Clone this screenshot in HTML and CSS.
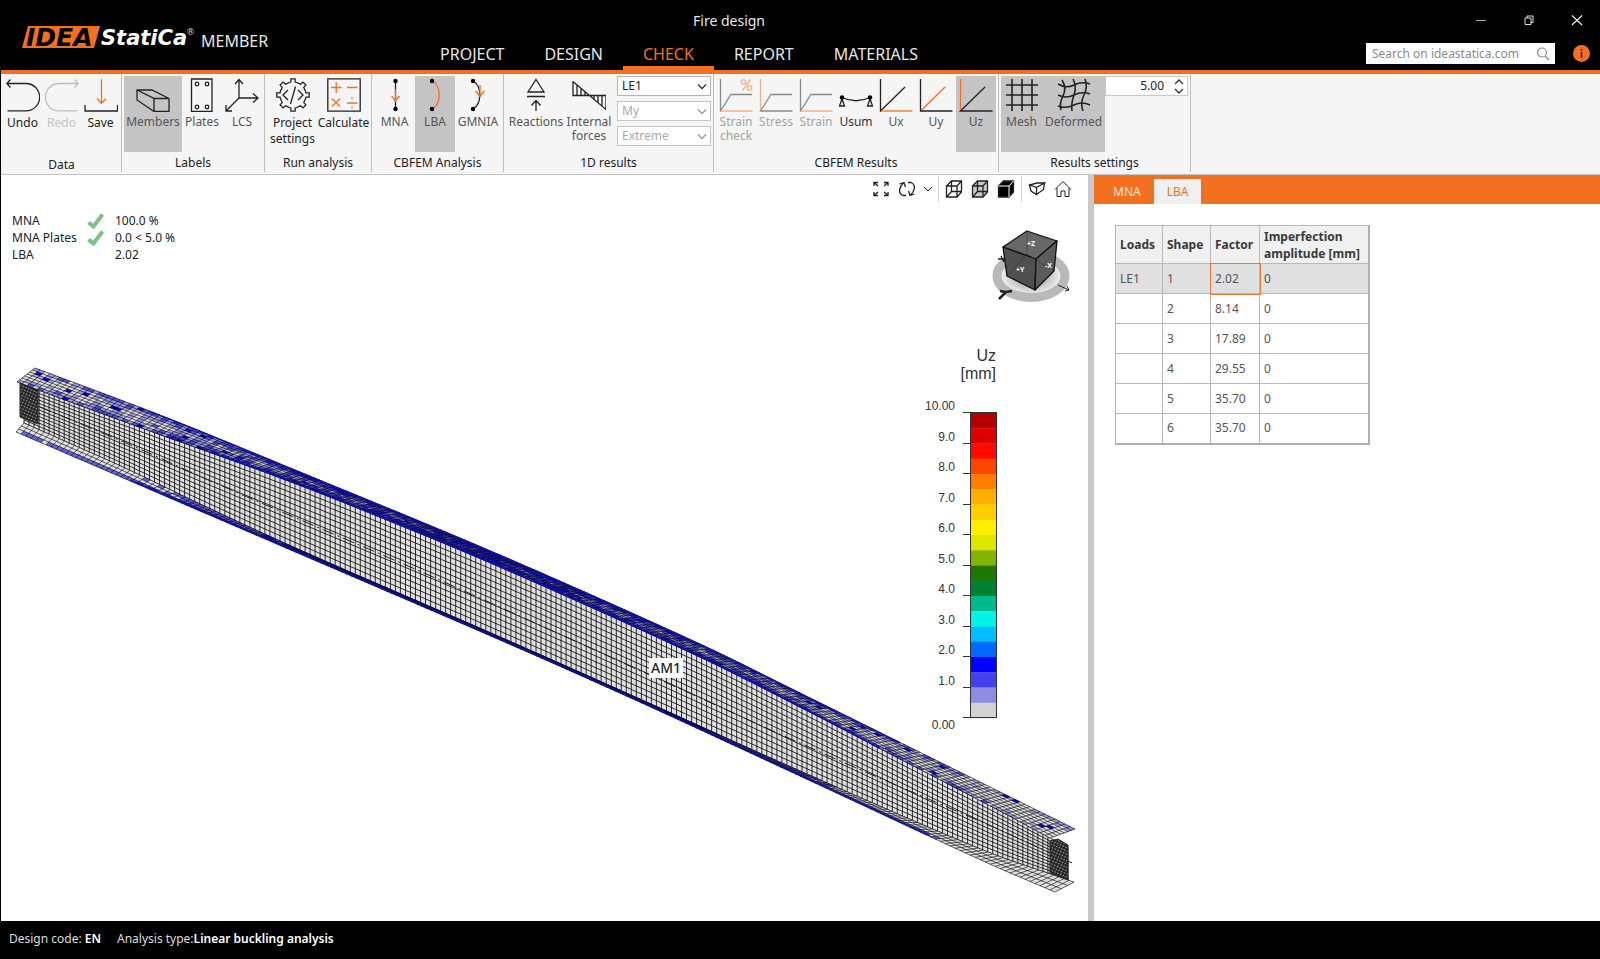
FILE: index.html
```html
<!DOCTYPE html>
<html lang="en">
<head>
<meta charset="utf-8">
<title>Fire design - IDEA StatiCa Member</title>
<meta name="viewport" content="width=device-width, initial-scale=1">
<link rel="stylesheet" href="styles.css">
</head>
<body>
<header class="header">
  <div class="brand">
    <svg class="brand-logo" width="170" height="30" viewBox="0 0 170 30" role="img" aria-label="IDEA StatiCa">
      <path d="M6 4H78L72 26H0Z" fill="#f37021"/>
      <text class="logo-idea" x="4" y="24">IDEA</text>
      <text class="logo-statica" x="79" y="23">StatiCa</text>
      <text class="logo-reg" x="164" y="13">®</text>
    </svg>
    <span class="brand-product">MEMBER</span>
  </div>
  <div class="header-center">
    <h1 class="doc-title">Fire design</h1>
    <nav class="tabs">
      <a class="tab" href="#project">PROJECT</a>
      <a class="tab" href="#design">DESIGN</a>
      <a class="tab tab-active" href="#check" aria-current="page">CHECK</a>
      <a class="tab" href="#report">REPORT</a>
      <a class="tab" href="#materials">MATERIALS</a>
    </nav>
  </div>
  <div class="header-side">
    <div class="window-controls">
      <button class="win-btn" aria-label="Minimize"><svg width="12" height="12"><path d="M1 6.500H11" stroke="#aaa"/></svg></button>
      <button class="win-btn" aria-label="Restore"><svg width="12" height="12" fill="none" stroke="#ddd"><path d="M2 4h6v6.500H2zM4 4V2h6v6.500H8"/></svg></button>
      <button class="win-btn" aria-label="Close"><svg width="12" height="12"><path d="M1 1.500L11 11M11 1.500L1 11" stroke="#eee" stroke-width="1.200"/></svg></button>
    </div>
    <div class="search-row">
      <label class="search">
        <input class="search-input" type="text" placeholder="Search on ideastatica.com" aria-label="Search on ideastatica.com">
        <svg width="14" height="14" fill="none" stroke="#888" stroke-width="1.200"><circle cx="6" cy="5.500" r="4.500"/><path d="M9 9l4 4"/></svg>
      </label>
      <button class="info" aria-label="Information"><svg width="17" height="17"><circle cx="8.500" cy="8.500" r="8.500" fill="#f37021"/><path d="M8.500 7v6M8.500 4v2" stroke="#222" stroke-width="1.500"/></svg></button>
    </div>
  </div>
</header>

<div class="ribbon">
  <section class="group group-data">
    <div class="group-items">
      <button class="rb rb-roomy w39"><svg class="ic" viewBox="0 0 34 34"><path d="M4.500 1.500L.8 5.500l3.700 4M1 5.500H20a13.700 13.700 0 0 1 0 27.400H1.500"/></svg>Undo</button>
      <button class="rb rb-roomy w39 rb-disabled" disabled><svg class="ic" viewBox="0 0 34 34"><path d="M29.500 1.500l3.700 4l-3.700 4M33 5.500H14a13.700 13.700 0 0 0 0 27.400H32.500"/></svg>Redo</button>
      <button class="rb rb-roomy w39"><svg class="ic" viewBox="0 0 34 34"><path d="M1 27v6H33.500V27"/><path class="or" d="M17.500 1V25M13 20.500l4.500 4.800l4.500-4.800"/></svg>Save</button>
    </div>
    <h2 class="group-label">Data</h2>
  </section>
  <section class="group">
    <div class="group-items">
      <button class="rb w58 rb-on" aria-pressed="true"><svg class="ic" viewBox="0 0 34 34"><path d="M1 12V22L18 33.500V20.500ZM1 12H16L33 20.500H18M33 20.500V33.500H18"/></svg>Members</button>
      <button class="rb w40"><svg class="ic" viewBox="0 0 34 34"><path d="M6.500 1H27V33.500H6.500Z"/><circle cx="12" cy="6" r="1.800"/><circle cx="22" cy="6" r="1.800"/><circle cx="12" cy="29" r="1.800"/><circle cx="22" cy="29" r="1.800"/></svg>Plates</button>
      <button class="rb w40"><svg class="ic" viewBox="0 0 34 34"><path d="M14 2V20H33M14 20L1 33M10 6L14 1.500L18 6M28 15.500l5 4.500l-5 4.500M1 27v6h6"/></svg>LCS</button>
    </div>
    <h2 class="group-label">Labels</h2>
  </section>
  <section class="group">
    <div class="group-items">
      <button class="rb rb-roomy w51"><svg class="ic" viewBox="0 0 34 34"><path id="gear" d=""/><path d="M12 12l-5 5l5 5M22 12l5 5l-5 5M19.500 8.500L14.500 26"/></svg>Project settings</button>
      <button class="rb rb-roomy w51"><svg class="ic" viewBox="0 0 34 34"><path d="M.8 .8H33.200V33.200H.8Z"/><path class="or" d="M4 9.500H14.500M9.200 4V15M20 9.500H30.500M5 20.500l8 8M13 20.500l-8 8M20 25H30.500M25 19v2M25 28.500v2"/></svg>Calculate</button>
    </div>
    <h2 class="group-label">Run analysis</h2>
  </section>
  <section class="group">
    <div class="group-items">
      <button class="rb w41"><svg class="ic" viewBox="0 0 34 34"><path d="M17.500 3V31"/><path class="or" d="M17.500 11V22M13.500 18l4 5l4-5"/><circle class="dot" cx="17.500" cy="3" r="2.200"/><circle class="dot" cx="17.500" cy="31" r="2.200"/></svg>MNA</button>
      <button class="rb w40 rb-on" aria-pressed="true"><svg class="ic" viewBox="0 0 34 34"><path class="or" d="M14 3C23.500 8 23.500 26 14 31"/><circle class="dot" cx="14" cy="3" r="2.200"/><circle class="dot" cx="14" cy="31" r="2.200"/></svg>LBA</button>
      <button class="rb w46"><svg class="ic" viewBox="0 0 34 34"><path d="M12 3C21 8 21 26 12 31"/><path class="or" d="M19 7V18M14.500 13l4.500 5.500l4.500-5.500"/><circle class="dot" cx="12" cy="3" r="2.200"/><circle class="dot" cx="12" cy="31" r="2.200"/></svg>GMNIA</button>
    </div>
    <h2 class="group-label">CBFEM Analysis</h2>
  </section>
  <section class="group">
    <div class="group-items">
      <button class="rb w60"><svg class="ic" viewBox="0 0 34 34"><path d="M17 1.500L25 14H9ZM8 18.500H26M17 33V23M12.500 27.500l4.500-5l4.500 5"/></svg>Reactions</button>
      <button class="rb w46"><svg class="ic" viewBox="0 0 34 34"><path d="M1 3V17.500H34M1 3.500L34 31.500V17.500M5 7V17.500M9 10.500V17.500M13 13.500V17.500M22 17.500V21M26 17.500V24.500M30 17.500V28"/></svg>Internal forces</button>
      <div class="selects">
        <label class="sel"><select aria-label="Load effect"><option>LE1</option></select><svg width="10" height="6"><path d="M1 .5l4 4l4-4"/></svg></label>
        <label class="sel sel-off"><select aria-label="Internal force" disabled><option>My</option></select><svg width="10" height="6"><path d="M1 .5l4 4l4-4"/></svg></label>
        <label class="sel sel-off"><select aria-label="Sections" disabled><option>Extreme</option></select><svg width="10" height="6"><path d="M1 .5l4 4l4-4"/></svg></label>
      </div>
    </div>
    <h2 class="group-label">1D results</h2>
  </section>
  <section class="group">
    <div class="group-items">
      <button class="rb w40 rb-faint" disabled><svg class="ic" viewBox="0 0 34 34"><path d="M1.500 1V33L12 16.500H33"/><path class="or" d="M1.500 33H33.500M31.500 1.500L23.500 12.500"/><circle class="or" cx="24.500" cy="4" r="2.300"/><circle class="or" cx="30.500" cy="10" r="2.300"/></svg>Strain check</button>
      <button class="rb w40 rb-faint" disabled><svg class="ic" viewBox="0 0 34 34"><path d="M33.500 33H1.500L12 16.500H33"/><path class="or" d="M1.500 1V32"/></svg>Stress</button>
      <button class="rb w40 rb-faint" disabled><svg class="ic" viewBox="0 0 34 34"><path d="M1.500 1V33L12 16.500H33"/><path class="or" d="M1.500 33H33.500"/></svg>Strain</button>
      <button class="rb w40 rb-dark"><svg class="ic" viewBox="0 0 34 34"><path d="M3 19.500Q17 26 31 19.500M3 21l-2.500 7H5.500ZM31 21l-2.500 7H33.500Z"/><circle class="dot" cx="3" cy="19.500" r="2.200"/><circle class="dot" cx="31" cy="19.500" r="2.200"/></svg>Usum</button>
      <button class="rb w40"><svg class="ic" viewBox="0 0 34 34"><path d="M1.500 1V33L26 9"/><path class="or" d="M2 33H33.500"/></svg>Ux</button>
      <button class="rb w40"><svg class="ic" viewBox="0 0 34 34"><path class="or" d="M1.500 33L26 9"/><path d="M1.500 1V33H33.500"/></svg>Uy</button>
      <button class="rb w40 rb-on" aria-pressed="true"><svg class="ic" viewBox="0 0 34 34"><path d="M33.500 33H1.500L26 9"/><path class="or" d="M1.500 1V32"/></svg>Uz</button>
    </div>
    <h2 class="group-label">CBFEM Results</h2>
  </section>
  <section class="group">
    <div class="group-items">
      <button class="rb w41 rb-on" aria-pressed="true"><svg class="ic ic-bold" viewBox="0 0 34 34"><path d="M7 1V33M17 1V33M27 1V33M1 7H33M1 17H33M1 27H33"/></svg>Mesh</button>
      <button class="rb w63 rb-on" aria-pressed="true"><svg class="ic ic-bold" viewBox="0 0 34 34"><path d="M5 2Q10 10 6 18T4 32M16 1Q20 9 17 17T15 33M28 1Q31 9 27 17T26 33M1 6Q9 11 17 7T33 6M1 17Q9 21 17 17T33 16M1 28Q9 31 17 27T33 27"/></svg>Deformed</button>
      <div class="spin">
        <input class="spin-input" type="text" value="5.00" aria-label="Deformation scale">
        <span class="spin-buttons">
          <button aria-label="Increase"><svg width="10" height="6"><path d="M1 5l4-4l4 4"/></svg></button>
          <button aria-label="Decrease"><svg width="10" height="6"><path d="M1 1l4 4l4-4"/></svg></button>
        </span>
      </div>
    </div>
    <h2 class="group-label">Results settings</h2>
  </section>
</div>

<main class="workspace">
  <section class="viewport">
    <svg class="scene" viewBox="1 175 1087 746" role="img" aria-label="Deformed mesh of member AM1">
      <defs>
        <radialGradient id="disc" cx="50%" cy="50%" r="50%"><stop offset=".3" stop-color="#aaa"/><stop offset="1" stop-color="#fff"/></radialGradient>
        <pattern id="dense" width="3" height="3" patternUnits="userSpaceOnUse" patternTransform="rotate(24)"><rect width="3" height="3" fill="#222"/><circle cx="1.500" cy="1.500" r=".8" fill="#aaa"/></pattern>
      </defs>
      <g id="beam"></g>
      <rect x="649" y="658" width="34" height="20" fill="#fff"/>
      <text class="member-tag" x="666" y="673" text-anchor="middle">AM1</text>

      <g>
        <ellipse cx="1031" cy="276" rx="34" ry="21.500" fill="url(#disc)"/>
        <ellipse cx="1031" cy="276" rx="34" ry="21.500" fill="none" stroke="#b9b9b9" stroke-width="9"/>
        <path d="M998 259h7M1001 256l3 6" stroke="#222" stroke-width="1.500" fill="none"/>
        <path d="M999 299l7-7M1000 291l6 1M1006 292l6-1" stroke="#222" stroke-width="2.500" fill="none"/>
        <path d="M1058 285l11 5M1065 291l4-1l-2-4" stroke="#222" stroke-width="1" fill="none"/>
        <g stroke="#111" stroke-width="1.300" stroke-linejoin="round">
          <path d="M1027 231L1057 241L1036 259L1003 247Z" fill="#686868"/>
          <path d="M1003 247L1036 259L1035 290L1007 276Z" fill="#505050"/>
          <path d="M1057 241L1036 259L1035 290L1054 271Z" fill="#5c5c5c"/>
        </g>
        <path d="M1007 276L1027 254L1027 231M1027 254L1054 271" stroke="#333" stroke-width=".5" fill="none"/>
        <g class="cube-text"><text x="1027" y="246">+Z</text><text x="1016" y="272">+Y</text><text x="1045" y="268">-X</text></g>
      </g>

      <g id="legend">
        <text class="legend-title" x="996" y="361" text-anchor="end">Uz</text>
        <text class="legend-title" x="996" y="379" text-anchor="end">[mm]</text>
      </g>
    </svg>

    <table class="summary">
      <tr><th scope="row">MNA</th><td class="tick"><svg width="17" height="16"><path d="M1.500 9.500l5 4L15.500 1.500" fill="none" stroke="#7fc083" stroke-width="4"/></svg></td><td>100.0 %</td></tr>
      <tr><th scope="row">MNA Plates</th><td class="tick"><svg width="17" height="16"><path d="M1.500 9.500l5 4L15.500 1.500" fill="none" stroke="#7fc083" stroke-width="4"/></svg></td><td>0.0 &lt; 5.0 %</td></tr>
      <tr><th scope="row">LBA</th><td></td><td>2.02</td></tr>
    </table>

    <div class="view-tools">
      <button aria-label="Zoom to fit"><svg width="18" height="18"><path d="M2 6V2.500H6M2 2.500L6 6M16 6V2.500H12M16 2.500L12 6M2 12v3.500H6M2 15.500L6 12M16 12v3.500H12M16 15.500L12 12"/></svg></button>
      <button aria-label="Rotate"><svg width="18" height="18"><path d="M8 15.500H5C-1 13 2 6 5.500 3M1.500 4L6 2.500L7.500 7M10 2.500H13C19 5 16 12 12.500 15M16.500 14L12 15.500L10.500 11"/></svg></button>
      <button class="narrow" aria-label="Rotation options"><svg width="10" height="6"><path class="thin" d="M1 1l4 4l4-4"/></svg></button>
      <span class="tool-sep"></span>
      <button aria-label="Wireframe"><svg width="18" height="18"><path d="M1.500 6H12V17H1.500ZM1.500 6L6.500 1H16.500V12L12 17M12 6L16.500 1M6.500 1V11.500H16M6.500 11.500L1.500 17"/></svg></button>
      <button aria-label="Transparent"><svg width="18" height="18"><path d="M1.500 6L6.500 1H16.500V12L12 17H1.500Z" fill="#c8c8c8"/><path d="M1.500 6H12V17M12 6L16.500 1M6.500 1V11.500H16M6.500 11.500L1.500 17"/></svg></button>
      <button aria-label="Solid"><svg width="18" height="18"><path d="M1.500 6L6.500 1H16.500V12L12 17H1.500Z" fill="#000"/><path d="M1.500 6H12V17M12 6L16.500 1" stroke="#fff" stroke-width="1"/></svg></button>
      <span class="tool-sep"></span>
      <button aria-label="Section view"><svg width="18" height="18"><path d="M1.500 5L8.500 7.500V14.500L3 11ZM1.500 5L9 3H16.500L8.500 7.500M16.500 3L15.500 9.500L8.500 14.500"/></svg></button>
      <button aria-label="Home view"><svg width="18" height="18"><path class="thin" d="M1 9.500L9 1.500L17 9.500M3 8V16.500H7V11h4v5.500h4V8"/></svg></button>
    </div>
  </section>
  <div class="splitter"></div>
  <aside class="panel">
    <div class="panel-tabs" role="tablist">
      <button class="panel-tab" role="tab" aria-selected="false">MNA</button>
      <button class="panel-tab panel-tab-on" role="tab" aria-selected="true">LBA</button>
    </div>
    <table class="factors">
      <thead><tr><th class="c1">Loads</th><th class="c2">Shape</th><th class="c3">Factor</th><th class="c4">Imperfection amplitude [mm]</th></tr></thead>
      <tbody>
        <tr class="row-on"><td>LE1</td><td>1</td><td class="cell-on">2.02</td><td>0</td></tr>
        <tr><td></td><td>2</td><td>8.14</td><td>0</td></tr>
        <tr><td></td><td>3</td><td>17.89</td><td>0</td></tr>
        <tr><td></td><td>4</td><td>29.55</td><td>0</td></tr>
        <tr><td></td><td>5</td><td>35.70</td><td>0</td></tr>
        <tr><td></td><td>6</td><td>35.70</td><td>0</td></tr>
      </tbody>
    </table>
  </aside>
</main>
<footer class="status">
  <span>Design code: <b>EN</b></span>
  <span>Analysis type:<b>Linear buckling analysis</b></span>
</footer>
<script src="scene.js"></script>
</body>
</html>
```

FILE: styles.css
```css
* { box-sizing: border-box; }
body {
  margin: 0;
  padding-left: 1px;
  min-height: 100vh;
  display: flex;
  flex-direction: column;
  background: #000;
  color: #222;
  font: 12px/16px "Noto Sans", "Open Sans", sans-serif;
}
button, input, select { font: inherit; color: inherit; margin: 0; }
button { border: 0; background: none; padding: 0; }
h1, h2 { margin: 0; font-weight: 400; }

.header {
  display: flex;
  height: 74px;
  background: #000;
  border-bottom: 4px solid #f37021;
  color: #e6e6e6;
}
.brand { flex: 0 0 419px; display: flex; gap: 9px; padding: 22px 0 0 21px; }
.brand-logo { overflow: visible; }
.logo-idea { font: italic bold 25px "DejaVu Sans", sans-serif; fill: #000; }
.logo-statica { font: italic bold 21px "DejaVu Sans", sans-serif; fill: #fff; }
.logo-reg { font: 9px "DejaVu Sans", sans-serif; fill: #ccc; }
.brand-product { font-size: 16px; line-height: 38px; }
.header-center { flex: 1; display: flex; flex-direction: column; }
.doc-title { height: 38px; padding-left: 273px; font-size: 14px; line-height: 41px; }
.tabs { display: flex; height: 32px; }
.tab { padding: 0 20px; font-size: 16px; line-height: 32px; color: #e6e6e6; text-decoration: none; }
.tab-active { color: #f37021; border-bottom: 4px solid #f37021; }
.header-side { display: flex; flex-direction: column; align-items: flex-end; }
.window-controls { display: flex; gap: 36px; height: 43px; padding: 14px 17px 0 0; }
.win-btn { width: 12px; height: 12px; }
.search-row { display: flex; align-items: center; gap: 18px; padding-right: 10px; }
.search { display: flex; align-items: center; width: 189px; height: 21px; padding: 0 5px 0 6px; background: #fff; }
.search-input { flex: 1; min-width: 0; border: 0; padding: 0; outline: 0; background: none; }
.search-input::placeholder { color: #8a8a8a; opacity: 1; }
.info { height: 17px; }
svg { flex: none; display: block; }

.ribbon { display: flex; height: 101px; background: #f5f5f5; border-bottom: 1px solid #c4c4c4; }
.group { height: 98px; padding: 2px 2px 0 2px; border-right: 1px solid #bdbdbd; }
.group-items { display: flex; height: 76px; }
.group-label { font-size: 12px; line-height: 21px; text-align: center; }
.group-data { padding-right: 1px; }
.group-data .group-label { padding-top: 2px; }
.rb {
  display: flex;
  flex-direction: column;
  align-items: center;
  gap: 3px;
  padding-top: 2px;
  line-height: 14px;
  color: #555;
}
.rb-roomy { line-height: 16px; color: #222; }
.rb-dark { color: #333; }
.rb-on { background: #c4c4c4; }
.rb-disabled { color: #c4c4c4; }
.rb-faint { color: #a3a3a3; }
.w39 { width: 39px; }
.w40 { width: 40px; }
.w41 { width: 41px; }
.w46 { width: 46px; }
.w51 { width: 51px; }
.w58 { width: 58px; }
.w60 { width: 60px; }
.w63 { width: 63px; }
.ic { width: 34px; height: 34px; fill: none; stroke: #222; stroke-width: 1.3; }
.ic-bold { stroke-width: 1.6; }
.ic .or { stroke: #f37021; }
.ic .dot { fill: #000; stroke: none; }
.rb-disabled .ic { stroke: #bdbdbd; }
.rb-faint .ic { opacity: 0.5; }
.selects { display: flex; flex-direction: column; gap: 5px; margin-left: 5px; }
.sel { position: relative; display: block; width: 94px; height: 20px; }
.sel select {
  width: 100%;
  height: 100%;
  padding: 0 4px;
  appearance: none;
  border: 1px solid #b4b4b4;
  border-radius: 0;
  background: #fff;
  opacity: 1;
}
.sel svg { position: absolute; right: 4px; top: 8px; fill: none; stroke: #333; stroke-width: 1.3; }
.sel-off select { color: #aaa; border-color: #c4c4c4; }
.sel-off svg { stroke: #999; }
.spin { display: flex; width: 83px; height: 20px; border: 1px solid #c8c8c8; background: #fff; }
.spin-input { flex: 1; min-width: 0; border: 0; padding: 0 10px 0 0; background: none; text-align: right; }
.spin-buttons { display: flex; flex-direction: column; justify-content: space-around; padding-right: 3px; }
.spin-buttons svg { fill: none; stroke: #333; stroke-width: 1.3; }

.workspace { flex: 1; display: flex; background: #fff; }
.viewport { position: relative; flex: 1087; min-width: 0; }
.scene { position: absolute; inset: 0; width: 100%; height: 100%; }
.splitter { flex: 0 0 6px; background: #c9c9c9; }
.panel { flex: 506; min-width: 0; }
.member-tag { font: 500 14px "Noto Sans", sans-serif; fill: #222; }
.cube-text { font: bold 7px "Noto Sans", sans-serif; fill: #fff; }
.legend-title { font: 16px "Liberation Sans", sans-serif; fill: #333; }
.legend-label { font: 12px "Liberation Sans", sans-serif; fill: #333; }

.summary { position: absolute; left: 11px; top: 37px; border-spacing: 0; line-height: 17px; }
.summary th { padding: 0; width: 75px; font-weight: 400; text-align: left; }
.summary td { padding: 0; }
.summary .tick { width: 28px; }

.view-tools { position: absolute; right: 12px; top: 0; display: flex; align-items: center; height: 27px; }
.view-tools button { display: flex; justify-content: center; width: 26px; }
.view-tools .narrow { width: 16px; }
.view-tools svg { fill: none; stroke: #222; stroke-width: 1.3; }
.view-tools .thin { stroke-width: 1; }
.tool-sep { width: 1px; height: 26px; background: #d8d8d8; margin: 0 2px; }

.panel-tabs { display: flex; height: 29px; padding: 4px 0 0 6px; background: #f37021; }
.panel-tab { padding: 0 13px; color: #ffe6d6; line-height: 25px; }
.panel-tab-on { background: #f0f0f0; color: #f37021; }
.factors { margin: 21px 0 0 21px; border-collapse: collapse; border: 2px solid #b0b0b0; border-top-width: 1px; border-left-width: 1px; color: #555; }
.factors th, .factors td { border: 1px solid #b8b8b8; padding: 0 4px; text-align: left; }
.factors th { height: 38px; background: #f0f0f0; color: #3a3a3a; line-height: 17px; }
.factors td { height: 30px; }
.c1 { width: 47px; }
.c2 { width: 48px; }
.c3 { width: 49px; }
.c4 { width: 109px; }
.row-on { background: #e0e0e0; }
.factors .cell-on { position: relative; outline: 1px solid #e0793a; }

.status { display: flex; gap: 16px; height: 38px; padding-left: 8px; line-height: 35px; color: #ddd; }
.status b { color: #fff; font-weight: 600; }
```

FILE: scene.js
```js
const NS = "http://www.w3.org/2000/svg";
const add = (parent, tag, attrs, text) => {
  const el = document.createElementNS(NS, tag);
  for (const k in attrs) el.setAttribute(k, attrs[k]);
  if (text) el.textContent = text;
  parent.appendChild(el);
  return el;
};

/* Cog outline of the project settings icon */
(() => {
  const n = 8, pts = [];
  for (let i = 0; i < n; i++) {
    const a = i / n * 2 * Math.PI;
    [[-0.29, 13], [-0.17, 13.2], [-0.13, 16.3], [0.13, 16.3], [0.17, 13.2], [0.29, 13]].forEach(([d, r]) =>
      pts.push((17 + r * Math.sin(a + d)).toFixed(1) + " " + (17 - r * Math.cos(a + d)).toFixed(1)));
  }
  document.getElementById("gear").setAttribute("d", "M" + pts.join("L") + "Z");
})();

/* Colour scale */
(() => {
  const legend = document.getElementById("legend");
  const colors = ["#b40000", "#dc0000", "#ff0a00", "#ff4600", "#ff7d00", "#ffaf00", "#ffcd00", "#fff000", "#dce600", "#82b400",
    "#1e7800", "#008232", "#00b98c", "#00f5e6", "#00beff", "#0069ff", "#0000ff", "#4141f0", "#8c8ce1", "#d2d2d2"];
  const top = 413, step = 15.25;
  colors.forEach((c, i) => add(legend, "rect", { x: 970, y: top + i * step, width: 27, height: step + 0.3, fill: c }));
  add(legend, "rect", { x: 970.5, y: top - 0.5, width: 26, height: 305, fill: "none", stroke: "#333" });
  for (let i = 0; i <= 10; i++) {
    const y = Math.round(top + i * 30.5) - 0.5;
    add(legend, "path", { d: "M963 " + y + "H970", stroke: "#333" });
    const label = i === 0 ? "10.00" : i === 10 ? "0.00" : (10 - i).toFixed(1);
    add(legend, "text", { class: "legend-label", x: 955, y: y + (i === 10 ? 11 : -3), "text-anchor": "end" }, label);
  }
})();

/* Finite element mesh of the beam */
(() => {
  const beam = document.getElementById("beam");
  const curve = pts => x => {
    let i = 0;
    while (i < pts.length - 2 && x > pts[i + 1][0]) i++;
    const slope = k => {
      const a = pts[Math.max(0, k - 1)], b = pts[Math.min(pts.length - 1, k + 1)];
      return (b[1] - a[1]) / (b[0] - a[0]);
    };
    const [x0, y0] = pts[i], [x1, y1] = pts[i + 1], h = x1 - x0, t = (x - x0) / h;
    return y0 * (1 + 2 * t) * (1 - t) ** 2 + y1 * t * t * (3 - 2 * t)
      + slope(i) * h * t * (1 - t) ** 2 + slope(i + 1) * h * t * t * (t - 1);
  };
  const back = curve([[35, 368], [160, 415], [300, 472], [500, 555], [700, 644], [800, 693], [1075, 829]]);
  const front = curve([[17, 382], [60, 398], [150, 431], [270, 474], [360, 509], [500, 567], [700, 657], [800, 707], [900, 759], [1000, 811], [1050, 838]]);
  const low = curve([[16, 432], [100, 468], [200, 511], [300, 554], [500, 640], [633, 699], [800, 776], [983, 861], [1055, 892]]);
  const root = curve([[24, 423], [60, 439], [125, 468], [200, 504], [300, 550], [500, 637], [633, 696], [800, 771], [983, 850], [1068, 880]]);

  const lerp = (a, b, t) => a + (b - a) * t;
  const sheet = (fa, a0, a1, fb, b0, b1) => (u, v) => {
    const xa = lerp(a0, a1, u), xb = lerp(b0, b1, u);
    return [lerp(xa, xb, v), lerp(fa(xa), fb(xb), v)];
  };
  const P = p => p[0].toFixed(1) + " " + p[1].toFixed(1);
  let seed = 7;
  const rnd = () => (seed = (seed * 16807) % 2147483647) / 2147483647;

  const draw = (f, nu, nv, color, line) => {
    const fills = {};
    for (let i = 0; i < nu; i++) for (let j = 0; j < nv; j++) {
      const c = color((i + 0.5) / nu, (j + 0.5) / nv);
      fills[c] = (fills[c] || "") + "M" + P(f(i / nu, j / nv)) + "L" + P(f((i + 1) / nu, j / nv))
        + "L" + P(f((i + 1) / nu, (j + 1) / nv)) + "L" + P(f(i / nu, (j + 1) / nv)) + "Z";
    }
    for (const c in fills) add(beam, "path", { d: fills[c], fill: c, stroke: c, "stroke-width": 0.3 });
    let d = "";
    for (let j = 0; j <= nv; j++) for (let i = 0; i <= 120; i++) d += (i ? "L" : "M") + P(f(i / 120, j / nv));
    for (let i = 0; i <= nu; i++) d += "M" + P(f(i / nu, 0)) + "L" + P(f(i / nu, 1));
    add(beam, "path", { d, fill: "none", stroke: "#000", "stroke-width": line });
  };

  const grey = "#e0e0e0";
  const flange = (u, v) => {
    const m = 1 - Math.abs(u - 0.45) * 1.9, e = Math.abs(v - 0.5) * 2, r = rnd();
    if (r < 0.025) return "#0000d2";
    const s = m * 1.3 + e * 0.7 + (r - 0.5) * 0.7;
    if (s > 1.35) return "#1e1ee6";
    if (s > 1) return "#5050e1";
    if (s > 0.62) return "#9c9ce8";
    return grey;
  };
  const bottom = (u, v) => {
    const m = 1 - Math.abs(u - 0.45) * 1.9 + (v > 0.6 ? 0.12 : -0.12), s = m + (rnd() - 0.5) * 0.1;
    return s > 0.5 ? "#1e1ee6" : s > 0.28 ? "#6464dc" : grey;
  };

  draw(sheet(front, 24, 1068, root, 24, 1068), 208, 12, () => grey, 0.8);
  draw(sheet(root, 24, 1074, low, 16, 1055), 208, 3, bottom, 0.6);
  draw(sheet(back, 35, 1075, front, 17, 1050), 208, 7, flange, 0.6);

  /* deformed edges of the flanges */
  const edge = (f, a, b, w, dy) => {
    let d = "";
    for (let i = 0; i <= 80; i++) { const x = lerp(a, b, i / 80); d += (i ? "L" : "M") + P([x, f(x) + dy]); }
    add(beam, "path", { d, fill: "none", stroke: "#1010aa", "stroke-width": w });
  };
  edge(front, 210, 880, 1.8, -0.5);
  edge(back, 150, 900, 1.4, 0.5);
  edge(low, 130, 930, 1.4, -1);

  const axis = curve([[40, 407], [133, 446], [213, 482], [310, 524], [433, 577], [820, 752], [1000, 830], [1070, 862]]);
  let d = "";
  for (let i = 0; i <= 80; i++) { const x = lerp(40, 1072, i / 80); d += (i ? "L" : "M") + P([x, axis(x)]); }
  add(beam, "path", { d, fill: "none", stroke: "#222", "stroke-width": 1, "stroke-dasharray": "12 4 2 4" });

  add(beam, "path", { d: "M20 383L38 390V424L20 417Z", fill: "url(#dense)", stroke: "#222" });
  add(beam, "path", { d: "M1050 841L1058 839L1068 845V880L1050 873Z", fill: "url(#dense)", stroke: "#222" });
})();
```
